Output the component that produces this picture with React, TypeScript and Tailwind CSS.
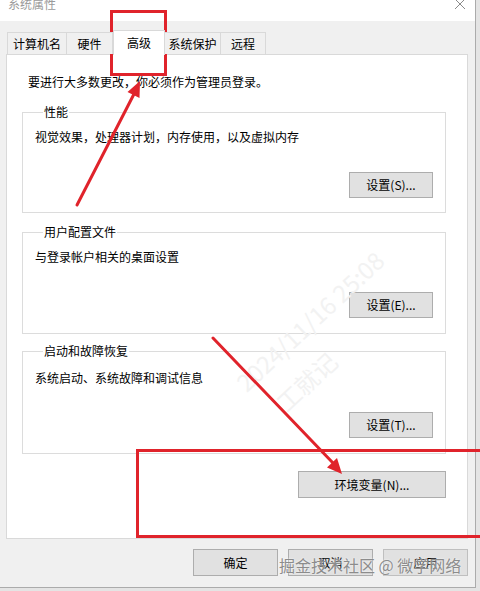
import React from "react";

const font = "font-['Noto_Sans_CJK_SC','Microsoft_YaHei',sans-serif]";

function Btn({ children, className = "" }: { children?: React.ReactNode; className?: string }) {
  return (
    <button
      className={`flex items-center justify-center border border-[#adadad] bg-[#e1e1e1] text-[12px] leading-[16px] text-black ${className}`}
    >
      {children}
    </button>
  );
}

function Group({
  title,
  desc,
  btn,
  className = "",
  descTop = "mt-[9px]",
  btnTop = "mt-[27px]",
  bottom = "pb-[14px]",
}: {
  title: string;
  desc: string;
  btn: string;
  className?: string;
  descTop?: string;
  btnTop?: string;
  bottom?: string;
}) {
  return (
    <fieldset className={`w-[424px] border border-[#dcdcdc] px-[12px] ${bottom} ${className}`}>
      <legend className="ml-[8px] px-[1px] text-[12px] leading-[16px] text-black">{title}</legend>
      <div className={`${descTop} text-[12px] leading-[16px] text-black`}>{desc}</div>
      <div className={`${btnTop} flex justify-end`}>
        <Btn className="h-[26px] w-[84px]">{btn}</Btn>
      </div>
    </fieldset>
  );
}

export default function App() {
  const tabs = [
    { label: "计算机名", w: "w-[60px]" },
    { label: "硬件", w: "w-[47px]" },
    { label: "高级", w: "w-[52px]", active: true },
    { label: "系统保护", w: "w-[57px]" },
    { label: "远程", w: "w-[46px]" },
  ];

  return (
    <div className={`relative h-[591px] w-[480px] overflow-hidden bg-[#e4e4e4] ${font}`}>
      {/* window */}
      <div className="flex h-[588px] w-[476px] flex-col border-r border-b border-[#ababab] bg-[#f0f0f0]">
        {/* title bar */}
        <div className="flex h-[21px] items-start justify-between bg-white pl-[8px] pr-[8px]">
          <span className="-mt-[4px] text-[12px] leading-[16px] text-[#9a9a9a]">系统属性</span>
          <svg width="14" height="12" viewBox="0 0 14 12" className="-mt-[2px]">
            <path d="M2 1 L12 11 M12 1 L2 11" stroke="#8a8a8a" strokeWidth="1" fill="none" />
          </svg>
        </div>

        <div className="pt-[9px]">
          {/* tabs */}
          <div className="relative z-10 ml-[7px] flex h-[24px] items-end">
            {tabs.map((t) =>
              t.active ? (
                <div
                  key={t.label}
                  className={`${t.w} -mb-px flex h-[25px] items-start justify-center border border-b-0 border-[#d9d9d9] bg-white pt-[4px] text-[12px] leading-[16px] text-black`}
                >
                  {t.label}
                </div>
              ) : (
                <div
                  key={t.label}
                  className={`${t.w} -ml-px flex h-[22px] items-center justify-center border border-b-0 border-[#d9d9d9] bg-[#f0f0f0] text-[12px] leading-[16px] text-black first:ml-0`}
                >
                  {t.label}
                </div>
              )
            )}
          </div>

          {/* panel */}
          <div className="ml-[6px] h-[485px] w-[462px] border border-[#d9d9d9] bg-white pl-[15px] pt-[19px]">
            <div className="pl-[6px] text-[12px] leading-[16px] text-black">
              要进行大多数更改，你必须作为管理员登录。
            </div>
            <Group
              title="性能"
              desc="视觉效果，处理器计划，内存使用，以及虚拟内存"
              btn="设置(S)..."
              className="mt-[14px]"
            />
            <Group
              title="用户配置文件"
              desc="与登录帐户相关的桌面设置"
              btn="设置(E)..."
              className="mt-[11px]"
              bottom="pb-[15px]"
            />
            <Group
              title="启动和故障恢复"
              desc="系统启动、系统故障和调试信息"
              btn="设置(T)..."
              className="mt-[9px]"
              descTop="mt-[11px]"
              btnTop="mt-[26px]"
              bottom="pb-[15px]"
            />
            <div className="mt-[17px] flex w-[424px] justify-end">
              <Btn className="h-[27px] w-[148px]">环境变量(N)...</Btn>
            </div>
          </div>

          {/* dialog buttons */}
          <div className="mt-[10px] flex justify-end gap-[10px] pr-[7px]">
            <Btn className="h-[27px] w-[85px]">确定</Btn>
            <Btn className="h-[27px] w-[85px]">取消</Btn>
            <Btn className="h-[27px] w-[85px] border-[#bfbfbf] bg-[#cccccc] text-[#c2c2c2]">应用</Btn>
          </div>
        </div>
      </div>

      {/* faint diagonal watermark */}
      <div className="pointer-events-none absolute left-[240px] top-[372px] origin-left -rotate-[43deg] whitespace-nowrap text-[24px] leading-[28px] text-[#f2f2f2]">
        2024/11/16 25:08
      </div>
      <div className="pointer-events-none absolute left-[280px] top-[392px] origin-left -rotate-[43deg] whitespace-nowrap text-[24px] leading-[28px] text-[#f2f2f2]">
        工就记
      </div>

      {/* red annotations */}
      <svg className="pointer-events-none absolute left-0 top-0" width="480" height="591" viewBox="0 0 480 591">
        <rect x="111.5" y="11.5" width="54" height="63" fill="none" stroke="#e0232b" strokeWidth="3" />
        <rect x="137.5" y="450.5" width="346" height="86" fill="none" stroke="#e0232b" strokeWidth="3" />
        <line x1="77" y1="205" x2="134" y2="94" stroke="#e0232b" strokeWidth="3" strokeLinecap="round" />
        <polygon points="140,81 139.5,98 127.5,92" fill="#e0232b" />
        <line x1="213" y1="338" x2="333" y2="463" stroke="#e0232b" strokeWidth="3" strokeLinecap="round" />
        <polygon points="342,474 327,467.5 337,458" fill="#e0232b" />
      </svg>

      {/* site watermark */}
      <div className="pointer-events-none absolute left-[279px] top-[554px] whitespace-nowrap text-[16px] leading-[22px] text-[#8c8c8c] [text-shadow:0_0_2px_#ffffff]">
        掘金技术社区 @ 微学网络
      </div>
    </div>
  );
}
